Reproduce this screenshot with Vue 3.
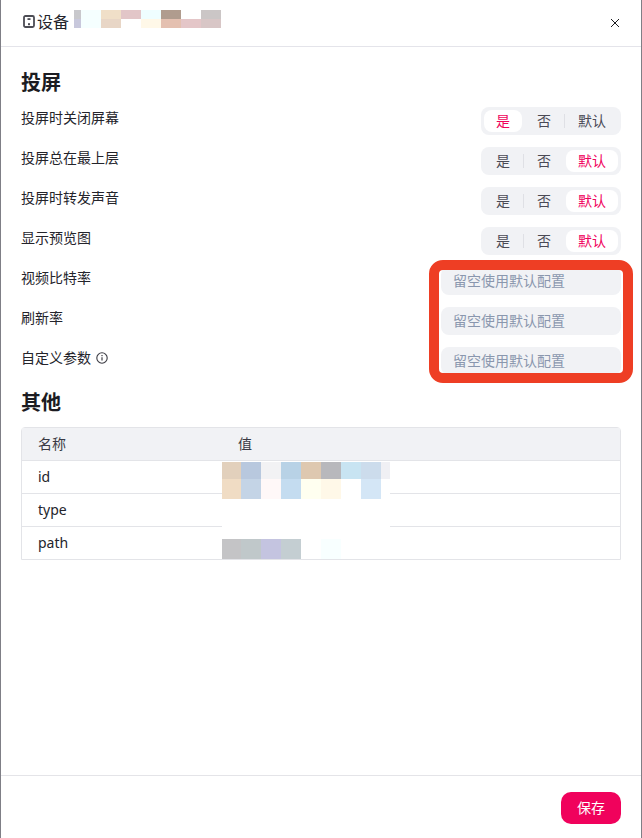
<script setup>
const titleBlur = [
  { w: 7, top: '#c8c8cc', bottom: '#c8c8dc' },
  { w: 20, top: '#f5ffff', bottom: '#f5ffff' },
  { w: 20, top: '#f0dfc8', bottom: '#e8d6c6' },
  { w: 20, top: '#e2c6c8', bottom: '#fff' },
  { w: 20, top: '#effeff', bottom: '#fff8e8' },
  { w: 20, top: '#b09c8e', bottom: '#e4c0b0' },
  { w: 20, top: '#fff', bottom: '#e4c6c8' },
  { w: 20, top: '#cbc6c6', bottom: '#d8c6c6' }
]

const tableBlur = [
  { w: 19, c: ['#e2d0bc', '#f0dcc4', '#fff', '#fff', '#c4c4c6'] },
  { w: 20, c: ['#b8c8de', '#c4d4e6', '#fff', '#fff', '#c0c8ca'] },
  { w: 20, c: ['#f2f2f4', '#fff8f8', '#fff', '#fff', '#c4c4e0'] },
  { w: 20, c: ['#b8d2e6', '#c4dcf0', '#fff', '#fff', '#c4ced2'] },
  { w: 20, c: ['#dec8b0', '#fffff0', '#fff', '#fff', '#fff'] },
  { w: 20, c: ['#b8b8bc', '#fff8e8', '#fff', '#fff', '#f8ffff'] },
  { w: 20, c: ['#c8e4f2', '#fff', '#fff', '#fff', '#fff'] },
  { w: 20, c: ['#ccdcec', '#d4e6f6', '#fff', '#fff', '#fff'] },
  { w: 9, c: ['#f0f0f4', '#fff', '#fff', '#fff', '#fff'] }
]

const options = ['是', '否', '默认']

const switches = [
  { label: '投屏时关闭屏幕', active: 0 },
  { label: '投屏总在最上层', active: 2 },
  { label: '投屏时转发声音', active: 2 },
  { label: '显示预览图', active: 2 }
]

const inputs = [
  { label: '视频比特率' },
  { label: '刷新率' },
  { label: '自定义参数', info: true }
]

const rows = ['id', 'type', 'path']
</script>

<template>
  <div class="dialog">
    <header class="head">
      <svg class="device" width="12" height="13" viewBox="0 0 12 13" fill="none">
        <rect x="1" y="1" width="10" height="11" rx="1.5" stroke="#4c4c54" stroke-width="1.8" />
        <rect x="4.5" y="3.2" width="3" height="1.8" fill="#4c4c54" />
        <rect x="5" y="8.2" width="2" height="2" fill="#4c4c54" />
      </svg>
      <span class="title">设备</span>
      <div class="title-blur">
        <div v-for="(col, i) in titleBlur" :key="i" :style="{ width: col.w + 'px' }">
          <i class="cell-a" :style="{ background: col.top }"></i>
          <i class="cell-b" :style="{ background: col.bottom }"></i>
        </div>
      </div>
      <svg class="close" width="10" height="10" viewBox="0 0 10 10" fill="none">
        <path d="M1 1l8 8M9 1L1 9" stroke="#1c1c20" stroke-width="1" />
      </svg>
    </header>

    <main class="body">
      <h2>投屏</h2>
      <div class="settings">
        <div v-for="item in switches" :key="item.label" class="row">
          <span class="label">{{ item.label }}</span>
          <div class="segment">
            <button
              v-for="(opt, i) in options"
              :key="opt"
              :class="['seg-item', {
                active: i === item.active,
                'has-line': i > 0 && i !== item.active && i - 1 !== item.active
              }]"
            >{{ opt }}</button>
          </div>
        </div>
        <div v-for="item in inputs" :key="item.label" class="row">
          <span class="label">
            {{ item.label }}
            <svg v-if="item.info" class="info" width="12" height="12" viewBox="0 0 12 12" fill="none">
              <circle cx="6" cy="6" r="5.2" stroke="#3c3c44" stroke-width="1.1" />
              <path d="M6 5.2v3.4" stroke="#3c3c44" stroke-width="1.2" />
              <rect x="5.4" y="3" width="1.2" height="1.2" fill="#3c3c44" />
            </svg>
          </span>
          <input class="field" placeholder="留空使用默认配置" />
        </div>
        <div class="marker"></div>
      </div>

      <h2 class="second">其他</h2>
      <div class="table">
        <div class="tr th"><span>名称</span><span>值</span></div>
        <div v-for="name in rows" :key="name" class="tr"><span>{{ name }}</span><span></span></div>
        <div class="table-blur">
          <div v-for="(col, i) in tableBlur" :key="i" :style="{ width: col.w + 'px' }">
            <i v-for="(c, j) in col.c" :key="j" :class="j === 0 ? 'cell-c' : 'cell-d'" :style="{ background: c }"></i>
          </div>
        </div>
      </div>
    </main>

    <footer class="foot">
      <button class="save">保存</button>
    </footer>
  </div>
</template>

<style scoped>
.dialog {
  width: 642px;
  height: 838px;
  box-sizing: border-box;
  display: flex;
  flex-direction: column;
  background: #fff;
  border-left: 1px solid #7f7f86;
  border-right: 1px solid #7f7f86;
  color: #24242b;
  font-family: "Noto Sans", "Noto Sans CJK SC", sans-serif;
  font-size: 14px;
}
.head {
  height: 47px;
  box-sizing: border-box;
  flex-shrink: 0;
  display: flex;
  align-items: center;
  padding: 0 22px 5px;
  border-bottom: 1px solid #e4e4ea;
}
.device {
  margin: 2px 2px 0 0;
}
.title {
  font-size: 16px;
  margin-right: 5px;
}
.title-blur {
  display: flex;
  margin-bottom: 3px;
}
.title-blur i {
  display: block;
}
.cell-a {
  height: 9px;
}
.cell-b {
  height: 9px;
}
.close {
  margin: 5px -1px 0 auto;
}
.body {
  flex: 1;
  padding: 24px 20px 0;
}
h2 {
  margin: 0 0 12px;
  font-size: 20px;
  line-height: 24px;
  font-weight: 700;
  color: #1c1c22;
}
h2.second {
  margin: 16px 0 12px;
}
.settings {
  position: relative;
  display: flex;
  flex-direction: column;
  gap: 12px;
}
.row {
  height: 28px;
  display: flex;
  justify-content: space-between;
  align-items: flex-start;
}
.label {
  line-height: 22px;
}
.info {
  vertical-align: -1px;
  margin-left: 1px;
}
.segment {
  width: 140px;
  height: 28px;
  box-sizing: border-box;
  display: flex;
  gap: 3px;
  padding: 3px;
  background: #f1f2f5;
  border-radius: 8px;
}
.seg-item {
  position: relative;
  height: 22px;
  flex: 1 1 38px;
  padding: 0;
  border: 0;
  border-radius: 8px;
  background: transparent;
  color: #4a4a55;
  font: inherit;
  line-height: 22px;
}
.seg-item:last-child {
  flex: 0 0 52px;
}
.seg-item.active {
  background: #fff;
  color: #f0025c;
}
.seg-item.has-line::before {
  content: "";
  position: absolute;
  left: -2px;
  top: 4px;
  width: 1px;
  height: 14px;
  background: #dfe0e5;
}
.field {
  width: 180px;
  height: 28px;
  box-sizing: border-box;
  padding: 0 12px 2px;
  border: 0;
  border-radius: 8px;
  background: #f1f2f5;
  font: inherit;
  outline: none;
}
.field::placeholder {
  color: #8a97ae;
  opacity: 1;
}
.marker {
  position: absolute;
  right: -12px;
  top: 153px;
  width: 204px;
  height: 123px;
  box-sizing: border-box;
  border: 10px solid #ee3e24;
  border-radius: 14px;
}
.table {
  position: relative;
  border: 1px solid #e3e4e8;
  border-radius: 4px 4px 0 0;
}
.tr {
  height: 33px;
  box-sizing: border-box;
  display: grid;
  grid-template-columns: 200px 1fr;
  align-items: center;
  padding-bottom: 2px;
  border-bottom: 1px solid #e3e4e8;
}
.tr:nth-last-child(2) {
  border-bottom: 0;
  height: 32px;
}
.tr span {
  padding-left: 16px;
}
.th {
  background: #f1f2f5;
  color: #3a3a44;
}
.table-blur {
  position: absolute;
  left: 200px;
  top: 34px;
  display: flex;
}
.table-blur i {
  display: block;
}
.cell-c {
  height: 17px;
}
.cell-d {
  height: 20px;
}
.foot {
  height: 63px;
  box-sizing: border-box;
  flex-shrink: 0;
  display: flex;
  justify-content: flex-end;
  align-items: flex-start;
  padding: 16px 20px 0;
  border-top: 1px solid #e4e4e8;
}
.save {
  width: 60px;
  height: 32px;
  padding: 0 0 2px;
  border: 0;
  border-radius: 10px;
  background: #f0025c;
  color: #fff;
  font: inherit;
}
</style>

<style>
body {
  overflow: hidden;
}
</style>
